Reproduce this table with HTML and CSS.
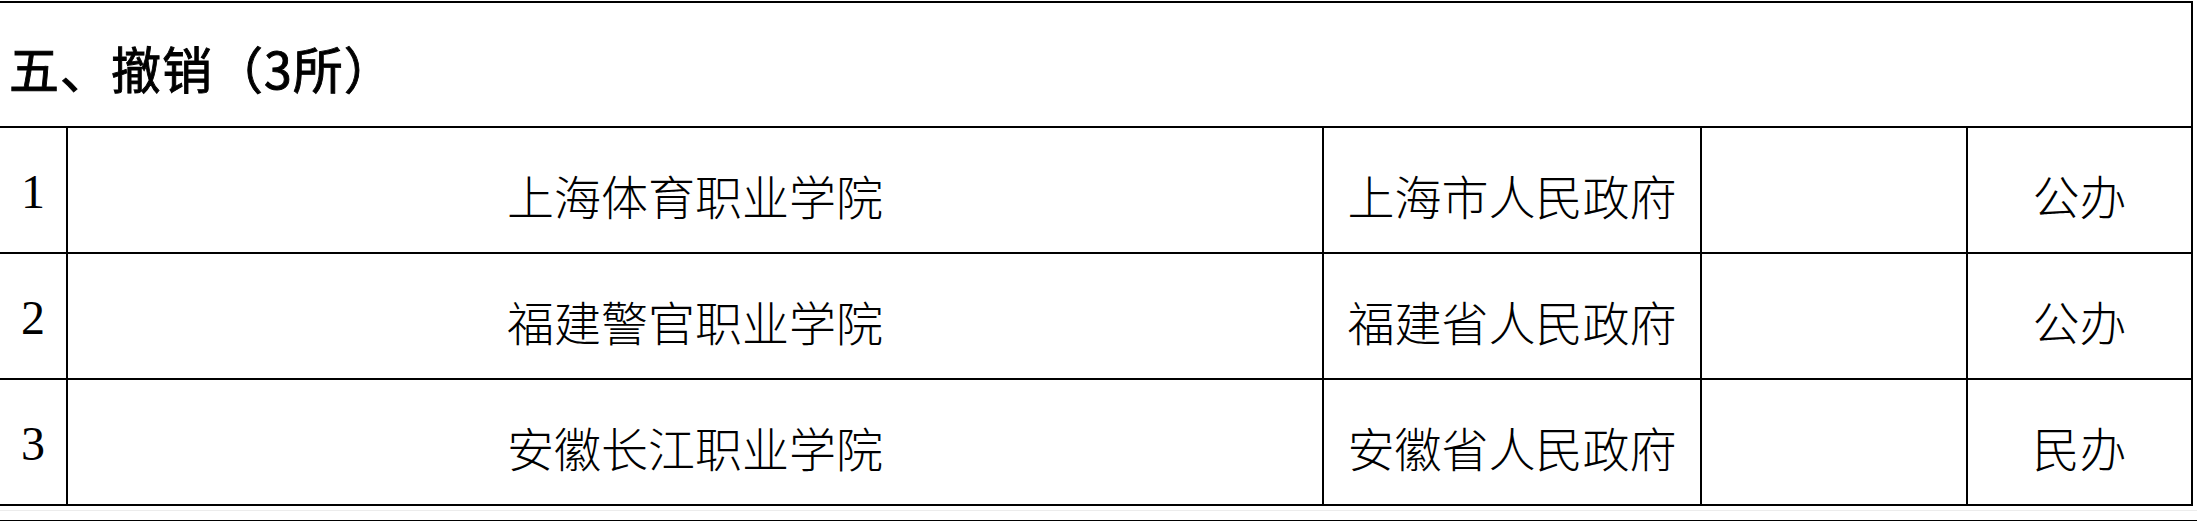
FILE: index.html
```html
<!DOCTYPE html>
<html lang="zh-CN">
<head>
<meta charset="utf-8">
<title>撤销</title>
<link rel="stylesheet" href="styles.css">
</head>
<body>
<table class="list">
  <colgroup>
    <col class="c-no">
    <col class="c-name">
    <col class="c-gov">
    <col class="c-note">
    <col class="c-type">
  </colgroup>
  <tr class="section">
    <td colspan="5" class="section-title">五、撤销（3所）</td>
  </tr>
  <tr class="row">
    <td class="num">1</td>
    <td class="cell">上海体育职业学院</td>
    <td class="cell">上海市人民政府</td>
    <td class="cell"></td>
    <td class="cell">公办</td>
  </tr>
  <tr class="row">
    <td class="num">2</td>
    <td class="cell">福建警官职业学院</td>
    <td class="cell">福建省人民政府</td>
    <td class="cell"></td>
    <td class="cell">公办</td>
  </tr>
  <tr class="row">
    <td class="num">3</td>
    <td class="cell">安徽长江职业学院</td>
    <td class="cell">安徽省人民政府</td>
    <td class="cell"></td>
    <td class="cell">民办</td>
  </tr>
</table>
<div class="next-rule"></div>
</body>
</html>
```

FILE: styles.css
```css
html, body {
  margin: 0;
  padding: 0;
  background: #ffffff;
}

body {
  width: 2197px;
  height: 521px;
  overflow: hidden;
}

.list {
  margin-top: 1px;
  width: 2192px;
  border-collapse: collapse;
  table-layout: fixed;
  color: #000;
}

.c-no { width: 67px; }
.c-name { width: 1256px; }
.c-gov { width: 378px; }
.c-note { width: 266px; }
.c-type { width: 225px; }

.list td {
  border: 2px solid #000;
  padding: 0;
  text-align: center;
  vertical-align: middle;
}

.list tr > td:first-child {
  border-left: none;
}

.section {
  height: 125px;
}

.list .section-title {
  text-align: left;
  padding-left: 9px;
  padding-top: 5px;
  font-family: "Noto Sans CJK SC", "Liberation Sans", sans-serif;
  font-weight: 400;
  font-size: 50px;
  letter-spacing: 1px;
  line-height: 1;
  -webkit-text-stroke: 0.9px #000;
}

.row {
  height: 126px;
}

.list .num {
  font-family: "Liberation Serif", serif;
  font-size: 48px;
  line-height: 1;
  padding-top: 4px;
}

.list .cell {
  font-family: "Noto Sans CJK SC", sans-serif;
  font-weight: 300;
  font-size: 47px;
  line-height: 1;
  padding-top: 8px;
}

.next-rule {
  margin-top: 4px;
  height: 9px;
  border-top: 1px solid #ececec;
  border-bottom: 2px solid #000;
}
```
